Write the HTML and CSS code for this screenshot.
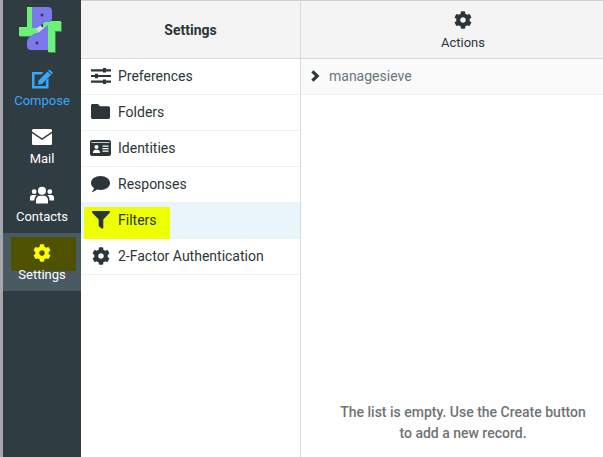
FILE: index.html
```html
<!DOCTYPE html>
<html lang="en">
<head>
<meta charset="utf-8">
<title>Settings</title>
<link rel="stylesheet" href="styles.css">
</head>
<body>
<svg class="defs" width="0" height="0" aria-hidden="true">
  <symbol id="cog" viewBox="0 0 512 512"><path d="M487.4 315.7l-42.6-24.6c4.3-23.2 4.3-47 0-70.2l42.6-24.6c4.9-2.8 7.1-8.6 5.5-14-11.1-35.6-30-67.8-54.7-94.6-3.8-4.1-10-5.1-14.8-2.3L380.8 110c-17.9-15.4-38.5-27.3-60.8-35.1V25.8c0-5.6-3.9-10.5-9.4-11.7-36.7-8.2-74.3-7.8-109.2 0-5.5 1.2-9.4 6.1-9.4 11.7V75c-22.2 7.9-42.8 19.8-60.8 35.1L88.7 85.5c-4.9-2.8-11-1.9-14.8 2.3-24.7 26.7-43.6 58.9-54.7 94.6-1.7 5.4.6 11.2 5.5 14L67.3 221c-4.3 23.2-4.3 47 0 70.2l-42.6 24.6c-4.9 2.8-7.1 8.6-5.5 14 11.1 35.6 30 67.8 54.7 94.6 3.8 4.1 10 5.1 14.8 2.3l42.6-24.6c17.9 15.4 38.5 27.3 60.8 35.1v49.2c0 5.6 3.9 10.5 9.4 11.7 36.7 8.2 74.3 7.8 109.2 0 5.5-1.2 9.4-6.1 9.4-11.7v-49.2c22.2-7.9 42.8-19.8 60.8-35.1l42.6 24.6c4.9 2.8 11 1.9 14.8-2.3 24.7-26.7 43.6-58.9 54.7-94.6 1.5-5.5-.7-11.3-5.6-14.1zM256 336c-44.1 0-80-35.9-80-80s35.9-80 80-80 80 35.9 80 80-35.9 80-80 80z"/></symbol>
</svg>
<div class="app">
  <nav class="sidebar">
    <div class="logo">
      <svg width="44" height="48" viewBox="0 0 44 48">
        <path class="logo-shadow" d="M10 3H17V23H26V17H44V27H38V48H31V32H2V23H10Z"/>
        <path class="logo-green" d="M9 2H16V22H25V16H43V26H37V47H30V31H1V22H9Z"/>
        <path class="logo-gap" d="M22 20L26 24 22 28 18 24Z"/>
        <path class="logo-purple" fill-rule="evenodd" d="M14 2H30C33 2 34 4 34 6V13C34 15 33 17 31 17H27L19 23H14ZM24 8.500a1.500 1.500 0 1 0 .01 0Z"/>
        <path class="logo-purple" fill-rule="evenodd" d="M30 20V45H13C10 45 9 43 9 41V37C9 34 11 32 13 31L17 28H20ZM19 36.500a1.500 1.500 0 1 0 .01 0Z"/>
      </svg>
    </div>
    <a class="nav-item nav-compose">
      <svg class="nav-icon" viewBox="0 0 22 20" width="22" height="20"><path d="M2 3H12.500L10.500 5.500H3.500V17H15V11.500L17.500 9V19.500H1V3Z"/><path d="M16.500 2.500L20 6 11 15 7 15.700 7.800 11.300Z"/><path d="M17.500 1.200a1.300 1.300 0 0 1 1.800 0L21.200 3.100a1.300 1.300 0 0 1 0 1.800L20.700 5.400 17 1.700Z"/></svg>
      <span>Compose</span>
    </a>
    <a class="nav-item">
      <svg class="nav-icon" viewBox="0 0 20 16" width="20" height="16"><path d="M1.600 0H18.400C19.300 0 20 .7 20 1.600V2.400L10 9.200 0 2.400V1.600C0 .7.700 0 1.600 0Z"/><path d="M0 4.200L10 11 20 4.200V14.400C20 15.300 19.300 16 18.400 16H1.600C.7 16 0 15.300 0 14.400Z"/></svg>
      <span>Mail</span>
    </a>
    <a class="nav-item">
      <svg class="nav-icon" viewBox="0 0 24 17" width="24" height="17"><circle cx="12" cy="4.200" r="4"/><circle cx="4.200" cy="5.200" r="2.400"/><circle cx="19.800" cy="5.200" r="2.400"/><path d="M6 17V13.500C6 10.800 8 9.200 10 9.200H14C16 9.200 18 10.800 18 13.500V17Z"/><path d="M0 14V10.800C0 9.400 1 8.400 2.400 8.400H5.600C6 8.400 6.300 8.600 6.500 8.800 5 10 4.400 11.600 4.400 14Z"/><path d="M24 14V10.800C24 9.400 23 8.400 21.600 8.400H18.400C18 8.400 17.700 8.600 17.500 8.800 19 10 19.600 11.600 19.600 14Z"/></svg>
      <span>Contacts</span>
    </a>
    <a class="nav-item nav-active">
      <i class="mark mark-nav"></i>
      <svg class="nav-icon nav-gear" width="18" height="18"><use href="#cog"/></svg>
      <span class="nav-label">Settings</span>
    </a>
  </nav>
  <section class="list-col">
    <header class="col-head"><h2>Settings</h2></header>
    <ul class="menu">
      <li class="menu-row">
        <span class="menu-icon"><svg viewBox="0 0 20 16" width="20" height="16"><path d="M0 1.200H12V0H15V1.200H20V3.400H15V4.600H12V3.400H0Z"/><path d="M0 6.900H4V5.700H7V6.900H20V9.100H7V10.300H4V9.100H0Z"/><path d="M0 12.600H12V11.400H15V12.600H20V14.800H15V16H12V14.800H0Z"/></svg></span>
        <span>Preferences</span>
      </li>
      <li class="menu-row">
        <span class="menu-icon"><svg viewBox="0 0 19 15" width="19" height="15"><path d="M1.600 0H7L9 2.200H17.200C18.200 2.200 19 3 19 4V13.200C19 14.200 18.200 15 17.200 15H1.800C.8 15 0 14.200 0 13.200V1.600C0 .7.700 0 1.600 0Z"/></svg></span>
        <span>Folders</span>
      </li>
      <li class="menu-row">
        <span class="menu-icon"><svg viewBox="0 0 21 16" width="21" height="16"><path fill-rule="evenodd" d="M2 0H19C20.100 0 21 .9 21 2V14C21 15.100 20.100 16 19 16H2C.9 16 0 15.100 0 14V2C0 .9.900 0 2 0ZM1.500 2.200V3H19.500V2.200ZM6.500 5a2 2 0 1 0 .01 0ZM3 12.700C3 10.900 4.200 9.800 5.500 9.800H7.500C8.800 9.800 10 10.900 10 12.700V13H3ZM12.500 5.500H18.500V6.800H12.500ZM12.500 8H18.500V9.300H12.500ZM12.500 10.500H18.500V11.800H12.500Z"/></svg></span>
        <span>Identities</span>
      </li>
      <li class="menu-row">
        <span class="menu-icon"><svg viewBox="0 0 19 16" width="19" height="16"><path d="M9.500 0C14.800 0 19 3.100 19 7S14.800 14 9.500 14C8.300 14 7.100 13.800 6 13.500 4.900 14.500 3 15.800.5 16 2 14.800 2.800 13.300 3 12.100 1.100 10.800 0 9 0 7 0 3.100 4.200 0 9.500 0Z"/></svg></span>
        <span>Responses</span>
      </li>
      <li class="menu-row menu-selected">
        <i class="mark mark-row"></i>
        <span class="menu-icon"><svg viewBox="0 0 18 18" width="18" height="18"><path d="M1 0H17C17.900 0 18.300 1 17.700 1.700L11.300 8.500V16.500C11.300 17.500 10.500 18 9.700 17.500L7.400 15.800C7 15.500 6.700 15 6.700 14.500V8.500L.3 1.700C-.3 1 .1 0 1 0Z"/></svg></span>
        <span>Filters</span>
      </li>
      <li class="menu-row">
        <span class="menu-icon"><svg width="18" height="18"><use href="#cog"/></svg></span>
        <span>2-Factor Authentication</span>
      </li>
    </ul>
  </section>
  <section class="detail-col">
    <header class="col-head action-head">
      <svg width="18" height="18"><use href="#cog"/></svg>
      <span>Actions</span>
    </header>
    <div class="tree-row">
      <svg viewBox="0 0 9 12" width="9" height="12"><path d="M2.500 .3L8.500 6 2.500 11.700 .3 9.500 4 6 .3 2.500Z"/></svg>
      <span>managesieve</span>
    </div>
    <p class="empty">The list is empty. Use the Create button<br>to add a new record.</p>
  </section>
</div>
</body>
</html>
```

FILE: styles.css
```css
* { box-sizing: border-box; }
html, body { margin: 0; height: 100%; overflow: hidden; }
body {
  font-family: Roboto, "Liberation Sans", sans-serif;
  font-size: 14px;
  color: #2c363a;
  background: #fff;
}
.defs { position: absolute; }
.app {
  display: flex;
  height: 457px;
  border-left: 3px solid #a4a8aa;
}
.sidebar {
  width: 78px;
  flex: none;
  background: #2f3c41;
  color: #fff;
  display: flex;
  flex-direction: column;
}
.logo {
  height: 59px;
  padding: 5px 0 0 15px;
}
.logo svg { display: block; }
.logo-shadow { fill: #3a8a48; }
.logo-green { fill: #6cf07a; }
.logo-gap { fill: #d8dce0; }
.logo-purple { fill: #7c78ee; }
.nav-item {
  position: relative;
  height: 58px;
  display: flex;
  flex-direction: column;
  align-items: center;
  padding-top: 10px;
  font-size: 13px;
  line-height: 16px;
}
.nav-icon {
  height: 20px;
  fill: currentColor;
  margin-bottom: 4px;
}
.nav-gear {
  position: relative;
  height: 18px;
  fill: #ffff00;
  margin: 1px 0 5px;
}
.nav-label { position: relative; }
.nav-compose { color: #37a9fb; }
.nav-active { background: #4a5a62; }
.mark { position: absolute; }
.mark-nav { left: 8px; top: 4px; width: 65px; height: 34px; background: #4e5200; }
.mark-row { left: 3px; top: 4px; width: 86px; height: 32px; background: #eeff00; }
.list-col {
  width: 220px;
  flex: none;
  border-right: 1px solid #d4dbde;
}
.col-head {
  height: 59px;
  background: #f4f4f4;
  border-top: 1px solid #ccd2d4;
  border-bottom: 1px solid #d4dbde;
  display: flex;
  align-items: center;
  justify-content: center;
}
.col-head h2 {
  margin: 0;
  font-size: 14px;
  font-weight: 700;
}
.menu {
  list-style: none;
  margin: 0;
  padding: 0;
}
.menu-row {
  position: relative;
  height: 36px;
  padding: 0 0 2px 9px;
  border-bottom: 1px solid #eff2f3;
  display: flex;
  align-items: center;
  font-size: 14px;
}
.menu-row > span { position: relative; }
.menu-icon {
  width: 21px;
  margin-right: 7px;
  display: flex;
  justify-content: center;
}
.menu-icon svg { fill: #2c363a; display: block; }
.menu-selected { background: #e9f5fb; }
.detail-col {
  flex: 1;
  min-width: 0;
  display: flex;
  flex-direction: column;
}
.action-head {
  flex-direction: column;
  padding: 3px 0 0 22px;
  font-size: 13px;
  line-height: 16px;
}
.action-head svg { fill: #2c363a; margin-bottom: 6px; }
.tree-row {
  height: 36px;
  padding: 0 0 2px 10px;
  background: #fafafa;
  border-bottom: 1px solid #eff2f3;
  display: flex;
  align-items: center;
  gap: 9px;
  color: #6c757b;
}
.tree-row svg { fill: #2c363a; }
.empty {
  margin: auto 0 0;
  padding: 0 0 13px 22px;
  text-align: center;
  color: #6f7376;
  font-weight: 500;
  line-height: 21px;
}
```
